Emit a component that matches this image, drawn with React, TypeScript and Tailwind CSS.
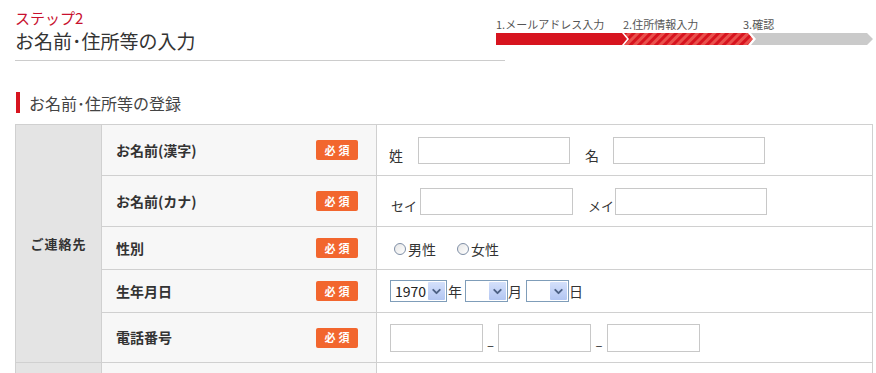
import { ChevronDown } from "lucide-react";

const inputCls = "h-[27px] border border-[#c8c8c8] bg-white";

function Badge() {
	return (
		<span className="flex h-[20px] w-[42px] items-center justify-center rounded-[2px] bg-[#f2662e] text-[11px] font-bold tracking-[3px] pl-[3px] text-white">
			必須
		</span>
	);
}

function Select({ value, width }: { value?: string; width: string }) {
	return (
		<div className={`flex h-[22px] ${width} items-stretch border border-[#7f9db9] bg-white p-px`}>
			<span className="flex-1 pl-[3px] text-[14px] leading-[18px] text-[#222]">{value}</span>
			<span className="flex w-[17px] items-center justify-center rounded-[1px] bg-gradient-to-b from-[#d4e0fb] to-[#b3c6f2]">
				<ChevronDown size={13} strokeWidth={3.5} className="text-[#4d6185]" />
			</span>
		</div>
	);
}

function Radio({ label }: { label: string }) {
	return (
		<label className="flex items-center gap-[2px] text-[14px] text-[#333]">
			<span className="h-[12px] w-[12px] rounded-full border border-[#7f8fa6] bg-gradient-to-br from-[#e6e6e6] to-white" />
			{label}
		</label>
	);
}

function ProgressBar() {
	return (
		<svg width="377" height="12" viewBox="0 0 377 12">
			<defs>
				<pattern id="stripe" width="6" height="6" patternUnits="userSpaceOnUse" patternTransform="rotate(45)">
					<rect width="6" height="6" fill="#e9504c" />
					<rect width="3" height="6" fill="#d7141f" />
				</pattern>
			</defs>
			<polygon points="0,0 126,0 131,6 126,12 0,12" fill="#d7141f" />
			<polygon points="128,0 252,0 257,6 252,12 128,12 133,6" fill="url(#stripe)" />
			<polygon points="255,0 371,0 377,6 371,12 255,12 260,6" fill="#cacaca" />
		</svg>
	);
}

type Row = { label: string; h: string; content: React.ReactNode };

const rows: Row[] = [
	{
		label: "お名前(漢字)",
		h: "h-[51px]",
		content: (
			<div className="flex items-center pl-[12px] text-[14px] text-[#333]">
				<span className="w-[29px] pt-[10px]">姓</span>
				<div className={`${inputCls} w-[152px]`} />
				<span className="ml-[15px] w-[28px] pt-[10px]">名</span>
				<div className={`${inputCls} w-[152px]`} />
			</div>
		),
	},
	{
		label: "お名前(カナ)",
		h: "h-[51px]",
		content: (
			<div className="flex items-center pl-[14px] text-[13px] text-[#333]">
				<span className="w-[29px] pt-[10px]">セイ</span>
				<div className={`${inputCls} w-[153px]`} />
				<span className="ml-[15px] w-[27px] pt-[10px]">メイ</span>
				<div className={`${inputCls} w-[152px]`} />
			</div>
		),
	},
	{
		label: "性別",
		h: "h-[43px]",
		content: (
			<div className="flex items-center gap-[21px] pl-[17px] pt-[2px]">
				<Radio label="男性" />
				<Radio label="女性" />
			</div>
		),
	},
	{
		label: "生年月日",
		h: "h-[43px]",
		content: (
			<div className="flex items-center pl-[13px] text-[14px] text-[#333]">
				<Select value="1970" width="w-[57px]" />
				<span className="ml-px w-[17px]">年</span>
				<Select width="w-[43px]" />
				<span className="w-[18px]">月</span>
				<Select width="w-[43px]" />
				<span>日</span>
			</div>
		),
	},
	{
		label: "電話番号",
		h: "h-[50px]",
		content: (
			<div className="flex items-center pl-[13px] text-[13px] text-[#333]">
				<div className="h-[28px] w-[93px] border border-[#c8c8c8]" />
				<span className="w-[15px] pt-[14px] text-center">–</span>
				<div className="h-[28px] w-[93px] border border-[#c8c8c8]" />
				<span className="w-[16px] pt-[14px] text-center">–</span>
				<div className="h-[28px] w-[93px] border border-[#c8c8c8]" />
			</div>
		),
	},
];

export default function App() {
	return (
		<div className="min-h-screen bg-white pl-[15px] pr-[3px] font-['Noto_Sans_CJK_JP',sans-serif] text-[#333]">
			<div className="flex">
				<div className="w-[481px] pt-[8px]">
					<p className="text-[15px] leading-[20px] text-[#c8102e]">ステップ2</p>
					<h1 className="pb-[6px] text-[19px] leading-[26px] text-[#333]">お名前･住所等の入力</h1>
				</div>
				<div className="pt-[17px]">
					<div className="flex h-[14px] text-[11px] leading-[14px] text-[#555]">
						<span className="w-[126px]">1.メールアドレス入力</span>
						<span className="w-[121px] pl-px">2.住所情報入力</span>
						<span>3.確認</span>
					</div>
					<div className="mt-[2px]">
						<ProgressBar />
					</div>
				</div>
			</div>
			<div className="h-px w-[490px] bg-[#cccccc]" />

			<div className="mt-[31px] ml-px flex h-[21px] items-center border-l-4 border-[#d7141f] pl-[9px] text-[16px] text-[#444]">
				お名前･住所等の登録
			</div>

			<table className="mt-[11px] w-full border-collapse border border-[#d0d0d0]">
				<tbody>
					{rows.map((r, i) => (
						<tr key={r.label} className={r.h}>
							{i === 0 && (
								<th
									rowSpan={rows.length}
									className="w-[86px] border border-[#d0d0d0] bg-[#e4e4e4] text-center text-[13px] font-bold tracking-[1px] text-[#333]"
								>
									ご連絡先
								</th>
							)}
							<td className="w-[275px] border border-[#d0d0d0] bg-[#f7f7f7] p-0">
								<div className="flex items-center justify-between pl-[14px] pr-[18px]">
									<span className="text-[14px] font-bold text-[#333]">{r.label}</span>
									<Badge />
								</div>
							</td>
							<td className="border border-[#d0d0d0] bg-white p-0">{r.content}</td>
						</tr>
					))}
					<tr className="h-[50px]">
						<th className="border border-[#d0d0d0] bg-[#e4e4e4]" />
						<td className="border border-[#d0d0d0] bg-[#f7f7f7]" />
						<td className="border border-[#d0d0d0] bg-white" />
					</tr>
				</tbody>
			</table>
		</div>
	);
}
